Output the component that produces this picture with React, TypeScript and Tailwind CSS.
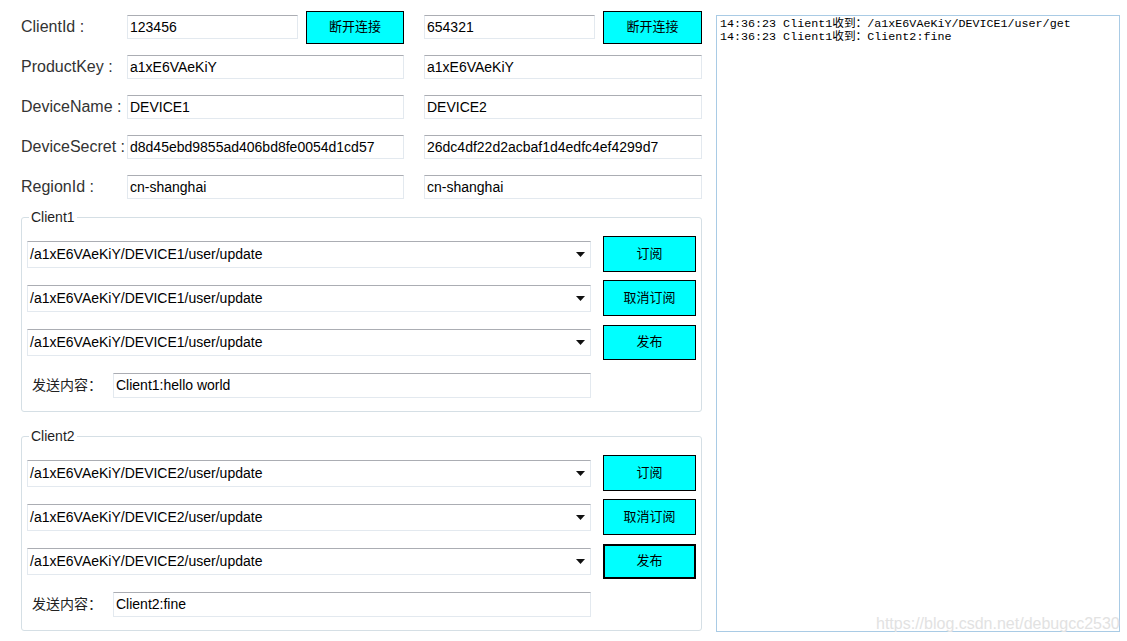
const fields = [
  { label: "ClientId :", a: "123456", b: "654321", connect: true },
  { label: "ProductKey :", a: "a1xE6VAeKiY", b: "a1xE6VAeKiY" },
  { label: "DeviceName :", a: "DEVICE1", b: "DEVICE2" },
  { label: "DeviceSecret :", a: "d8d45ebd9855ad406bd8fe0054d1cd57", b: "26dc4df22d2acbaf1d4edfc4ef4299d7" },
  { label: "RegionId :", a: "cn-shanghai", b: "cn-shanghai" },
];

const logs = [
  "14:36:23 Client1收到：/a1xE6VAeKiY/DEVICE1/user/get",
  "14:36:23 Client1收到：Client2:fine",
];

const TextBox = ({ value, className = "" }: { value: string; className?: string }) => (
  <div
    className={`flex items-center h-[24px] border border-[#e3e9ef] border-t-[#abadb3] bg-white pl-[2px] text-[14px] text-black whitespace-nowrap overflow-hidden ${className}`}
  >
    {value}
  </div>
);

const CyanButton = ({ label, focused = false, className = "" }: { label: string; focused?: boolean; className?: string }) => (
  <button
    className={`bg-[#00ffff] text-[13px] text-black ${focused ? "border-2" : "border"} border-black ${className}`}
  >
    {label}
  </button>
);

const ComboBox = ({ value }: { value: string }) => (
  <div className="flex items-center w-[564px] h-[27px] border border-[#e3e9ef] border-t-[#abadb3] bg-white pl-[2px] pr-[5px] text-[14px] text-black">
    <span className="flex-1 whitespace-nowrap">{value}</span>
    <svg width="9" height="5" viewBox="0 0 9 5">
      <path d="M0 0h9L4.5 5z" fill="#111" />
    </svg>
  </div>
);

const ClientGroup = ({ name, device, message, focusLast, className = "" }: { name: string; device: string; message: string; focusLast?: boolean; className?: string }) => {
  const topic = `/a1xE6VAeKiY/${device}/user/update`;
  const actions = ["订阅", "取消订阅", "发布"];
  return (
    <fieldset className={`border border-[#d5dfe5] rounded-[3px] px-[5px] pb-[5px] ${className}`}>
      <legend className="ml-[2px] px-[2px] text-[14px] leading-[16px] text-[#1e1e1e]">{name}</legend>
      <div className="pt-[7px]">
        {actions.map((a, i) => (
          <div key={a} className="flex items-center gap-[12px] h-[44px]">
            <ComboBox value={topic} />
            <CyanButton
              label={a}
              focused={focusLast && i === 2}
              className={`w-[93px] ${i === 2 ? "h-[35px]" : "h-[36px]"}`}
            />
          </div>
        ))}
        <div className="flex items-center h-[42px]">
          <span className="w-[86px] pl-[5px] text-[14px] text-[#222]">发送内容：</span>
          <TextBox value={message} className="w-[478px] h-[25px]" />
        </div>
      </div>
    </fieldset>
  );
};

export default function App() {
  return (
    <div className="relative flex w-[1127px] h-[641px] bg-white overflow-hidden font-['Liberation_Sans','Noto_Sans_CJK_SC',sans-serif]">
      <div className="ml-[21px] w-[681px]">
        <div className="pt-[7px]">
          {fields.map((f) => (
            <div key={f.label} className="flex items-center h-[40px]">
              <span className="w-[106px] text-[16px] text-[#333]">{f.label}</span>
              <div className="flex items-center gap-[8px] w-[277px]">
                <TextBox value={f.a} className="flex-1" />
                {f.connect && <CyanButton label="断开连接" className="w-[98px] h-[33px]" />}
              </div>
              <div className="flex items-center gap-[8px] w-[278px] ml-[20px]">
                <TextBox value={f.b} className="flex-1" />
                {f.connect && <CyanButton label="断开连接" className="w-[99px] h-[33px]" />}
              </div>
            </div>
          ))}
        </div>
        <ClientGroup name="Client1" device="DEVICE1" message="Client1:hello world" className="mt-[2px]" />
        <ClientGroup name="Client2" device="DEVICE2" message="Client2:fine" focusLast className="mt-[16px]" />
      </div>
      <div className="ml-[14px] mt-[15px] w-[404px] h-[617px] border border-[#a9cbe5] pl-[3px] pt-[2px] font-['Liberation_Mono','Noto_Sans_CJK_SC',monospace] text-[11.7px] leading-[13px] text-black">
        {logs.map((l, i) => (
          <div key={i} className="whitespace-pre">{l}</div>
        ))}
      </div>
      <span className="absolute left-[876px] top-[612px] text-[16px] text-[#e2e2e2]">https://blog.csdn.net/debugcc2530</span>
    </div>
  );
}
